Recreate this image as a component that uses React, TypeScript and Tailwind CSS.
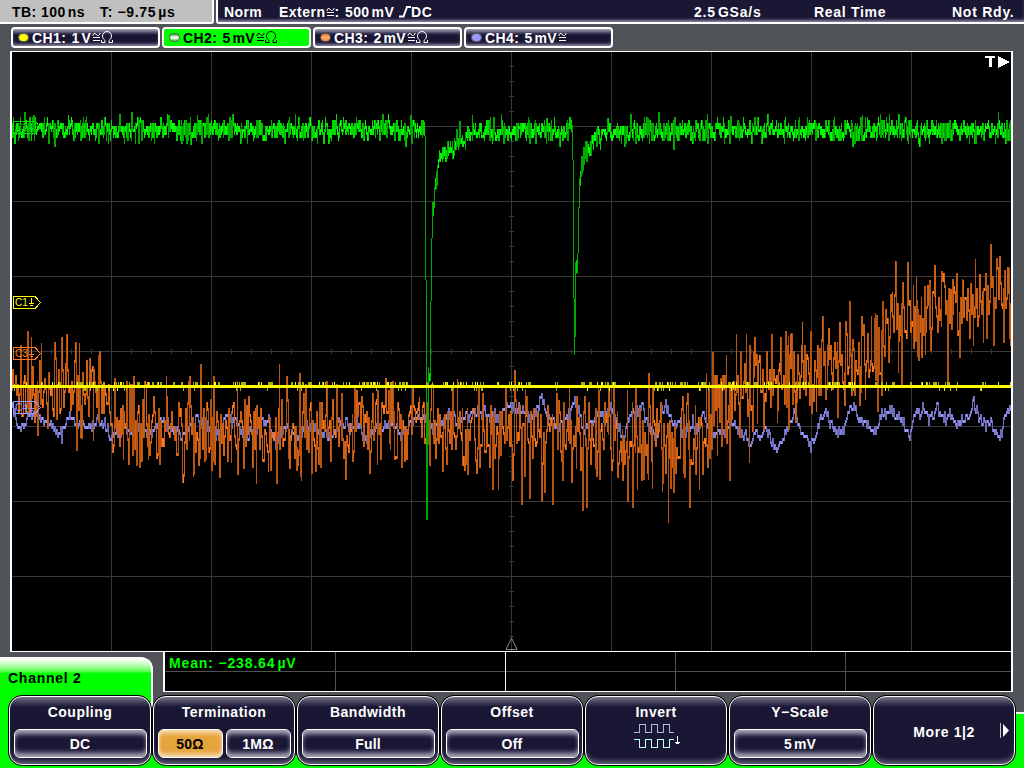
import React from "react";

type Point = [number, number];

// Small seeded generator, so the traces are the same on every render
const makeRandom = (seed: number) => () => {
  seed = (seed * 1664525 + 1013904223) % 4294967296;
  return seed / 4294967296;
};

const interpolate = (points: Point[], x: number) => {
  if (x <= points[0][0]) return points[0][1];
  for (let i = 1; i < points.length; i++) {
    const [x1, y1] = points[i];
    if (x <= x1) {
      const [x0, y0] = points[i - 1];
      return y0 + ((y1 - y0) * (x - x0)) / (x1 - x0);
    }
  }
  return points[points.length - 1][1];
};

const ch3Base: Point[] = [
  [12, 388], [100, 385], [112, 415], [170, 425], [300, 428], [400, 425], [500, 430], [600, 436],
  [680, 438], [720, 408], [760, 378], [800, 368], [880, 358], [895, 322], [940, 310], [1010, 300],
];

const ch3Peaks: Point[] = [
  [27, 331], [31, 337], [37, 433], [41, 343], [54, 343], [61, 337], [66, 334], [76, 448], [79, 343], [81, 436],
  [89, 358], [93, 438], [98, 355], [123, 457], [133, 376], [136, 463], [148, 457], [166, 376], [189, 376],
  [193, 472], [198, 463], [200, 364], [205, 457], [213, 376], [219, 475], [231, 460], [237, 472], [243, 466],
  [256, 481], [268, 469], [276, 481], [279, 364], [286, 376], [289, 466], [297, 463], [299, 373], [301, 478],
  [315, 469], [341, 393], [352, 459], [354, 387], [377, 390], [380, 457], [390, 383], [394, 457], [406, 457],
  [419, 397], [429, 463], [442, 469], [452, 388], [457, 379], [462, 463], [467, 472], [478, 387], [480, 463],
  [492, 487], [498, 487], [505, 387], [512, 478], [514, 370], [521, 502], [525, 390], [529, 496], [541, 499],
  [544, 490], [552, 502], [558, 400], [562, 478], [569, 388], [576, 466], [582, 508], [586, 505], [595, 466],
  [598, 390], [608, 388], [617, 475], [622, 478], [627, 499], [632, 505], [635, 388], [637, 487], [641, 478],
  [648, 373], [652, 388], [662, 481], [668, 520], [673, 490], [684, 475], [689, 505], [695, 472], [699, 487],
  [702, 472], [706, 373], [712, 352], [717, 453], [726, 355], [729, 478], [736, 334], [746, 334], [749, 460],
  [754, 337], [757, 421], [759, 355], [763, 427], [771, 334], [777, 408], [780, 337], [785, 331], [788, 427],
  [790, 334], [796, 400], [802, 322], [809, 403], [810, 331], [816, 409], [822, 316], [825, 397], [828, 328],
  [837, 415], [839, 322], [844, 403], [849, 301], [859, 403], [861, 316], [865, 397], [871, 316], [875, 313],
  [877, 409], [881, 393], [882, 301], [892, 292], [895, 277], [898, 370], [901, 385], [907, 262], [913, 346],
  [916, 277], [918, 358], [921, 355], [924, 286], [925, 352], [929, 280], [934, 265], [941, 271], [947, 382],
  [950, 289], [953, 286], [959, 355], [962, 280], [970, 283], [973, 343], [975, 259], [979, 274], [983, 340],
  [986, 274], [990, 244], [993, 343], [999, 256], [1003, 340], [1008, 268], [1010, 343],
];

const ch4Base: Point[] = [
  [12, 405], [16, 423], [22, 425], [30, 415], [40, 415], [44, 423], [50, 425], [56, 432], [62, 433], [68, 412],
  [74, 422], [80, 424], [90, 425], [98, 421], [105, 424], [110, 437], [116, 430], [124, 424], [133, 434],
  [140, 425], [147, 433], [153, 430], [160, 418], [168, 422], [175, 428], [180, 434], [190, 424], [197, 417],
  [205, 426], [212, 424], [218, 437], [225, 414], [232, 423], [235, 418], [242, 437], [250, 433], [258, 425],
  [268, 420], [276, 443], [284, 423], [290, 430], [297, 434], [305, 425], [312, 424], [320, 430], [330, 438],
  [338, 420], [345, 423], [350, 430], [356, 414], [364, 441], [372, 430], [378, 427], [384, 424], [392, 421],
  [400, 433], [408, 427], [416, 411], [424, 417], [432, 431], [440, 420], [448, 411], [458, 424], [465, 413],
  [472, 415], [478, 408], [484, 412], [490, 418], [494, 410], [499, 417], [507, 401], [513, 410], [520, 405],
  [530, 421], [540, 396], [546, 411], [553, 420], [560, 424], [567, 415], [573, 401], [579, 411], [583, 430],
  [592, 420], [599, 409], [604, 420], [610, 403], [615, 417], [622, 438], [628, 417], [635, 407], [641, 404],
  [647, 420], [655, 438], [660, 415], [665, 404], [672, 422], [680, 424], [685, 430], [690, 424], [696, 428],
  [702, 414], [706, 420], [712, 434], [718, 430], [724, 433], [730, 421], [738, 431], [744, 434], [748, 443],
  [755, 428], [759, 438], [765, 425], [770, 440], [775, 446], [783, 433], [788, 425], [793, 408], [798, 426],
  [804, 436], [810, 443], [818, 425], [824, 408], [830, 423], [840, 434], [846, 418], [851, 406], [857, 417],
  [866, 423], [874, 431], [880, 416], [888, 410], [896, 413], [902, 420], [909, 435], [915, 412], [924, 411],
  [930, 420], [936, 410], [944, 416], [950, 415], [957, 422], [965, 420], [972, 403], [978, 415], [985, 423],
  [990, 420], [994, 430], [1000, 430], [1005, 411], [1010, 408],
];

const ch2Base: Point[] = [
  [12, 128], [424, 128], [434, 190], [436, 178], [438, 165], [440, 157], [445, 151], [450, 147], [460, 138],
  [470, 132], [480, 130], [571, 130], [579, 178], [581, 166], [583, 157], [588, 147], [592, 139], [600, 133],
  [612, 131], [660, 129], [1010, 129],
];

// Columns of the two pulses: x, top, bottom
const ch2Pulses: [number, number, number][] = [
  [424, 122, 136], [425, 136, 280], [426, 280, 520], [427, 420, 520], [428, 367, 445], [429, 373, 382],
  [430, 301, 381], [431, 238, 301], [432, 202, 238], [433, 202, 216], [434, 187, 208], [435, 178, 190],
  [572, 125, 160], [573, 160, 298], [574, 298, 355], [575, 262, 337], [576, 260, 273], [577, 253, 274],
  [578, 207, 253], [579, 178, 208],
];

const ch2Peaks: Point[] = [
  [24, 112], [33, 115], [68, 115], [86, 116], [131, 112], [168, 115], [181, 141], [190, 142], [197, 115],
  [410, 115], [405, 144], [459, 121], [472, 115], [607, 118], [559, 144], [546, 118], [647, 118], [658, 112], [673, 147],
  [730, 116], [862, 115], [998, 112],
];

type Columns = { bright: string; mid: string; dim: string };

const buildColumns = (ranges: [number, number, number][], midAt: number, dimAt: number): Columns => {
  const out: Columns = { bright: "", mid: "", dim: "" };
  ranges.forEach(([x, a, b]) => {
    const key = b - a > dimAt ? "dim" : b - a > midAt ? "mid" : "bright";
    out[key] += `M${x + 0.5} ${a}V${b}`;
  });
  return out;
};

// Every column spans the previous sample and `count` new ones
const sampled = (seed: number, base: Point[], noise: number, step: number, peaks: Point[], count: number) => {
  const rnd = makeRandom(seed);
  const peakMap = new Map(peaks);
  const ranges: [number, number, number][] = [];
  let prev = base[0][1];
  for (let x = 12; x <= 1010; x++) {
    const peak = peakMap.get(x);
    const ys = [prev];
    for (let i = 0; i < count; i++) {
      const n = (rnd() + rnd() + rnd() - 1.5) * noise;
      ys.push(Math.round((interpolate(base, x) + n) / step) * step);
    }
    prev = ys[ys.length - 1];
    if (peak !== undefined) {
      ys.push(peak);
      if (rnd() < 0.75) prev = peak;
    }
    ranges.push([x, Math.min(...ys), Math.max(...ys) + step]);
  }
  return ranges;
};

const ch2Ranges = () => {
  const pulses = new Map(ch2Pulses.map((p) => [p[0], p]));
  return sampled(41, ch2Base, 11, 3, ch2Peaks, 2).map((r) => pulses.get(r[0]) ?? r);
};

const ch3 = buildColumns(sampled(77, ch3Base, 42, 3, ch3Peaks, 1), 10, 44);
const ch4 = buildColumns(sampled(5, ch4Base, 7, 3, [], 1), 5, 8);
const ch2 = buildColumns(ch2Ranges(), 9, 15);

const buildCh1Ticks = () => {
  const rnd = makeRandom(19);
  let bright = "";
  let dim = "";
  let active = false;
  for (let x = 12; x <= 1010; x++) {
    if (rnd() < 0.16) active = !active;
    if (active && rnd() < 0.7) {
      const tick = rnd() < 0.8 ? `M${x + 0.5} 382V385` : `M${x + 0.5} 388V391`;
      if (rnd() < 0.3) bright += tick;
      else dim += tick;
    }
  }
  return { bright, dim };
};
const ch1Ticks = buildCh1Ticks();

function Trace({ data, colors }: { data: Columns; colors: [string, string, string] }) {
  return (
    <g fill="none">
      <path d={data.dim} stroke={colors[2]} />
      <path d={data.mid} stroke={colors[1]} />
      <path d={data.bright} stroke={colors[0]} />
    </g>
  );
}

function Marker({ y, label, color }: { y: number; label: string; color: string }) {
  return (
    <g stroke={color} fill="none">
      <path d={`M13.5 ${y - 5.5}H35L40.5 ${y + 0.5}L35 ${y + 6.5}H13.5Z`} />
      <text
        x="15"
        y={y + 4}
        fill={color}
        stroke="none"
        fontSize="10"
        fontWeight="400"
        fontFamily="Liberation Sans, sans-serif"
      >
        {label}
      </text>
      <path d={`M31.5 ${y - 4}V${y + 2}M29 ${y + 1.5}H34M30 ${y + 3.5}H33`} />
    </g>
  );
}

function Display() {
  const vLines = [111, 211, 311, 411, 511, 611, 711, 811, 911];
  const hLines = [126, 201, 276, 351, 426, 501, 576];
  const xTicks = Array.from({ length: 49 }, (_, i) => 31 + i * 20);
  const yTicks = Array.from({ length: 39 }, (_, i) => 66 + i * 15);

  return (
    <svg className="block" width="999" height="599" viewBox="12 52 999 599" shapeRendering="crispEdges">
      <g stroke="#383838">
        {vLines.map((x) => <path key={x} d={`M${x + 0.5} 52V651`} />)}
        {hLines.map((y) => <path key={y} d={`M12 ${y + 0.5}H1011`} />)}
        {xTicks.map((x) => <path key={x} d={`M${x + 0.5} 349V354`} />)}
        {yTicks.map((y) => <path key={y} d={`M509 ${y + 0.5}H514`} />)}
      </g>
      <Trace data={ch4} colors={["#9898ff", "#8080d8", "#6c6cb8"]} />
      <Trace data={ch3} colors={["#ff7820", "#d06014", "#b45410"]} />
      <Trace data={ch2} colors={["#00ff00", "#00d800", "#00a800"]} />
      <path d="M12 386.5H1011" stroke="#ffff00" strokeWidth="3" />
      <path d={ch1Ticks.dim} stroke="#b0b000" />
      <path d={ch1Ticks.bright} stroke="#ffff00" />
      <Marker y={302} label="C1" color="#ffff00" />
      <Marker y={127} label="C2" color="#00e000" />
      <Marker y={353} label="C3" color="#ff7820" />
      <Marker y={407} label="C4" color="#9898ff" />
      <path d="M985 56H995V58H991.5V67H988.5V58H985Z" fill="white" />
      <path d="M998 56V68L1010 62Z" fill="white" />
      <path d="M511.5 638L506 649.5H517Z" fill="none" stroke="#888" shapeRendering="auto" />
    </svg>
  );
}

// A number and its unit, set apart by a narrow gap
function Val({ n, u }: { n: string; u: string }) {
  return <>{n}<span className="ml-[2px]">{u}</span></>;
}

function Approx() {
  return (
    <svg className="inline-block shrink-0" width="9" height="11" viewBox="0 0 9 11" fill="none" stroke="currentColor">
      <path d="M1 4V3L2 1.500H3L5.500 3.500H6.500L8 2V1" />
      <path d="M1 5.500H8M1 8.500H8" shapeRendering="crispEdges" />
    </svg>
  );
}

function ThinOhm() {
  return (
    <svg className="relative top-[-1px] shrink-0" width="12" height="12" viewBox="0 0 12 12" fill="none" stroke="currentColor">
      <path d="M.5 9V11.500H4V9.500C2 8 1.500 6.500 1.500 5C1.500 2.500 3.500.5 6 .5S10.500 2.500 10.500 5C10.500 6.500 10 8 8 9.500V11.500H11.500V9" />
    </svg>
  );
}

function ChannelTab({ name, n, u, led, ohm, active }: {
  name: string; n: string; u: string; led: string; ohm?: boolean; active?: boolean;
}) {
  return (
    <div
      className={`flex h-[21px] w-[149px] items-center rounded-[4px] border-2 border-white pl-[5px] ${
        active
          ? "bg-[#00ff00] text-black"
          : "bg-linear-to-b from-[#aaa8b8] via-[#1a1735] via-35% to-[#1a1735] shadow-[inset_0_-3px_3px_-1px_#8886a0]"
      }`}
    >
      <span className={`h-[9px] w-[11px] shrink-0 rounded-full border border-[#555] ${led}`} />
      <span className="mt-[1px] ml-[3px] tracking-[0.45px]">{name}:</span>
      <span className="mt-[1px] ml-[5px] mr-[1px] tracking-[0.3px]"><Val n={n} u={u} /></span>
      <Approx />
      {ohm && <ThinOhm />}
    </div>
  );
}

function SoftKey({ label, children }: { label?: string; children: React.ReactNode }) {
  return (
    <div className="h-[71px] w-[144px] shrink-0 rounded-[14px] border border-black bg-black">
      <div className="flex h-full w-full flex-col items-center rounded-[13px] border border-white bg-linear-to-b from-[#777589] via-[#1a1735] via-15% to-[#1a1735] shadow-[inset_0_-6px_5px_-3px_#626078]">
        {label && <div className="mt-[6px] h-[26px] shrink-0 leading-[18px] tracking-[0.5px]">{label}</div>}
        {children}
      </div>
    </div>
  );
}

function KeyValue({ wide, selected, children }: { wide?: boolean; selected?: boolean; children: React.ReactNode }) {
  return (
    <div
      className={`flex h-[29px] items-center justify-center rounded-[6px] border border-white ${wide ? "w-[133px]" : "w-[65px]"} ${
        selected
          ? "bg-[#e5a43c] text-black shadow-[inset_0_4px_4px_-1px_#f8dfb6,inset_0_-4px_4px_-1px_#f8dfb6]"
          : "bg-[#1a1735] shadow-[inset_0_6px_5px_-2px_#aaa8b8,inset_0_-6px_5px_-2px_#aaa8b8]"
      }`}
    >
      <span className="mt-[2px] tracking-[0.2px]">{children}</span>
    </div>
  );
}

function Header() {
  return (
    <div className="flex h-[24px] shrink-0 justify-between leading-[24px] tracking-[0.65px]">
      <div className="flex w-[214px] rounded-br-[3px] border-r-2 border-b-2 border-white bg-[#c0c0c0] pl-[12px] text-black tracking-[0.45px]">
        <span className="w-[88px]">TB: <Val n="100" u="ns" /></span>
        <span className="tracking-[0.65px]">T: −<Val n="9.75" u="µs" /></span>
      </div>
      <div className="flex w-[808px] rounded-bl-[3px] border-b-2 border-l-2 border-white bg-[#1a1735] shadow-[inset_0_-3px_3px_-1px_#8886a0]">
        <span className="ml-[6px] w-[55px] tracking-[0.4px]">Norm</span>
        <span className="flex w-[66px] items-start">
          <span className="tracking-[0.5px]">Extern</span>
          <span className="flex h-[24px] items-center"><Approx /></span>
          <span>:</span>
        </span>
        <span className="w-[54px] tracking-[0.4px]"><Val n="500" u="mV" /></span>
        <svg className="mt-[6px] shrink-0" width="12" height="12" viewBox="0 0 12 12" fill="none" stroke="white" strokeWidth="2">
          <path d="M0 10.500H4.500L8 1H12" />
        </svg>
        <span className="w-[283px]">DC</span>
        <span className="w-[120px] tracking-[0.8px]"><Val n="2.5" u="GSa/s" /></span>
        <span className="w-[138px] tracking-[0.7px]">Real Time</span>
        <span className="tracking-[0.75px]">Not Rdy.</span>
      </div>
    </div>
  );
}

function Measurements() {
  return (
    <div className="ml-[10px] grid h-[40px] w-[850px] grid-cols-[171px_170px_170px_170px_1fr] border-r-2 border-b border-l-2 border-white bg-black bg-[linear-gradient(#505050,#505050)] bg-[length:100%_1px] bg-[position:0_19px] bg-no-repeat">
      <div className="h-[39px] border-r border-[#505050] pl-[4px] leading-[22px] tracking-[0.85px] text-[#00ff00]">
        Mean: −<Val n="238.64" u="µV" />
      </div>
      <div className="border-r border-white" />
      <div className="border-r border-[#505050]" />
      <div className="border-r border-[#505050]" />
      <div />
    </div>
  );
}

export default function App() {
  return (
    <div className="relative flex h-[768px] w-[1024px] flex-col overflow-hidden bg-[#505459] font-['Liberation_Sans',Arial,sans-serif] text-[14px] font-bold whitespace-nowrap text-white">
      <Header />

      <div className="flex h-[27px] shrink-0 gap-[2px] pt-[3px] pl-[11px]">
        <ChannelTab name="CH1" n="1" u="V" led="bg-[#ffff00]" ohm />
        <ChannelTab name="CH2" n="5" u="mV" led="bg-linear-to-b from-[#20a020] via-white to-[#20d020]" ohm active />
        <ChannelTab name="CH3" n="2" u="mV" led="bg-linear-to-b from-[#ff7820] via-[#ffb070] to-[#ff7820]" ohm />
        <ChannelTab name="CH4" n="5" u="mV" led="bg-[#9898ff]" />
      </div>

      <div className="ml-[10px] h-[601px] w-[1003px] shrink-0 border-x-2 border-y border-white bg-black">
        <Display />
      </div>

      <div className="flex h-[43px] shrink-0">
        <div className="mt-[5px] h-[58px] w-[153px] shrink-0 rounded-tr-[12px] border-t-2 border-r-2 border-white bg-linear-to-b from-white to-[#00ff00] to-[14px] pl-[8px] pt-[10px] leading-[18px] tracking-[0.75px] text-black">
          Channel 2
        </div>
        <Measurements />
      </div>

      {/* Menu strip, the green body shows between and beside the keys */}
      <div className="relative h-[73px] shrink-0">
        <div className="absolute top-0 left-0 h-[73px] w-[20px] bg-[#00ff00]" />
        <div className="absolute bottom-0 left-0 h-[13px] w-full bg-[#00ff00]" />
        <div className="absolute top-[17px] right-0 h-[56px] w-[12px] border-t-2 border-white bg-[#00ff00]" />
        <div className="relative flex pl-[8px]">
          <SoftKey label="Coupling">
            <KeyValue wide>DC</KeyValue>
          </SoftKey>
          <SoftKey label="Termination">
            <div className="flex gap-[3px]">
              <KeyValue selected>50Ω</KeyValue>
              <KeyValue>1MΩ</KeyValue>
            </div>
          </SoftKey>
          <SoftKey label="Bandwidth">
            <KeyValue wide>Full</KeyValue>
          </SoftKey>
          <SoftKey label="Offset">
            <KeyValue wide>Off</KeyValue>
          </SoftKey>
          <SoftKey label="Invert">
            <svg className="relative top-[-5px] left-[2px]" width="48" height="26" viewBox="0 0 48 26" fill="none" shapeRendering="crispEdges">
              <path d="M0 8.500H5.500V.5H11.500V8.500H17.500V.5H23.500V8.500H29.500V.5H35.500V8.500H40" stroke="#a8b8e8" />
              <path d="M0 15.500H5.500V23.500H11.500V15.500H17.500V23.500H23.500V15.500H29.500V23.500H35.500V15.500H40" stroke="#c0ffff" />
              <path d="M43.500 12V20M41 18.500H46M42 19.500H45" stroke="white" />
            </svg>
          </SoftKey>
          <SoftKey label="Y−Scale">
            <KeyValue wide><Val n="5" u="mV" /></KeyValue>
          </SoftKey>
          <SoftKey>
            <div className="flex h-full w-full items-center justify-end pr-[5px] tracking-[0.6px]">
              <span className="mr-[24px] mt-[3px]">More 1|2</span>
              <svg width="10" height="15" viewBox="0 0 10 15">
                <path d="M1.500 0V15" stroke="#c8c8d0" />
                <path d="M4 1V14L10 7.500Z" fill="white" />
              </svg>
            </div>
          </SoftKey>
        </div>
      </div>
    </div>
  );
}
